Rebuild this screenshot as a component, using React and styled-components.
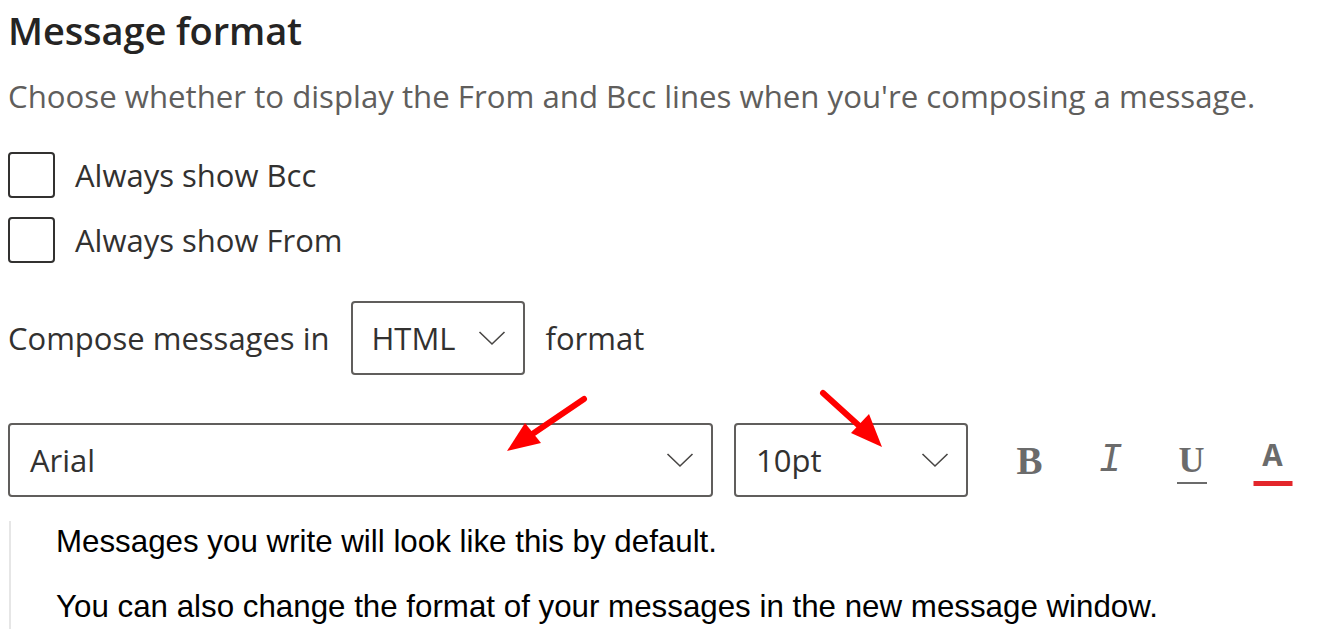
import React from "react";
import styled, { createGlobalStyle } from "styled-components";

const Global = createGlobalStyle`
  html, body { margin: 0; padding: 0; background: #fff; }
  body { font-family: "Open Sans", "Noto Sans", sans-serif; color: #323130; }
`;

const Page = styled.div`
  position: relative;
  width: 1328px;
  height: 639px;
  overflow: hidden;
  padding: 0 0 0 8px;
  box-sizing: border-box;
`;

const Title = styled.h1`
  margin: 0;
  padding-top: 4px;
  font-size: 38px;
  font-weight: 600;
  line-height: 52px;
  color: #252423;
  letter-spacing: -0.1px;
`;

const Desc = styled.p`
  margin: 19px 0 0;
  font-size: 31.2px;
  line-height: 42px;
  color: #605e5c;
`;

const CheckList = styled.div`
  margin-top: 35px;
  display: flex;
  flex-direction: column;
  gap: 19px;
`;

const CheckRow = styled.label`
  display: flex;
  align-items: center;
  gap: 20px;
  font-size: 31px;
  line-height: 42px;
  color: #323130;
`;

const Box = styled.span`
  width: 43px;
  height: 42px;
  border: 2px solid #323130;
  border-radius: 4px;
  box-sizing: content-box;
  flex: none;
`;

const ComposeRow = styled.div`
  margin-top: 38px;
  display: flex;
  align-items: center;
  gap: 21px;
  font-size: 31px;
  color: #323130;
`;

const Select = styled.div`
  box-sizing: border-box;
  height: 74px;
  width: ${(p) => p.$w}px;
  border: 2px solid #605e5c;
  border-radius: 4px;
  display: flex;
  align-items: center;
  justify-content: space-between;
  padding: 0 ${(p) => p.$pr}px 0 ${(p) => p.$pl}px;
  font-size: 31px;
  color: #323130;
  flex: none;
`;

const Toolbar = styled.div`
  margin-top: 48px;
  display: flex;
  align-items: center;
  gap: 21px;
`;

const FmtGroup = styled.div`
  display: flex;
  align-items: center;
  margin-left: 0;
  padding-top: 2px;
`;

const FmtBtn = styled.span`
  position: relative;
  width: 81px;
  height: 48px;
  display: flex;
  justify-content: center;
  align-items: center;
  font-family: ${(p) =>
    p.$serif ? '"Liberation Serif", "Times New Roman", serif' : '"Liberation Mono", "DejaVu Sans Mono", monospace'};
  font-size: ${(p) => p.$size || 40}px;
  line-height: 48px;
  color: #6b6b6b;
  font-weight: ${(p) => (p.$bold ? 700 : 400)};
  font-style: ${(p) => (p.$italic ? "italic" : "normal")};
`;

const Glyph = styled.span`
  display: block;
  transform: translateY(${(p) => p.$dy || 0}px);
`;

const Under = styled.span`
  position: absolute;
  left: 50%;
  transform: translateX(-50%);
  bottom: ${(p) => p.$b}px;
  width: ${(p) => p.$w}px;
  height: ${(p) => p.$h}px;
  background: ${(p) => p.$c};
`;

const Preview = styled.div`
  margin-top: 24px;
  margin-left: 1px;
  border-left: 2px solid #e6e6e6;
  padding: 4px 0 0 45px;
  font-family: "Liberation Sans", Arial, sans-serif;
  font-size: 31.3px;
  color: #000;
  height: 104px;
`;

const PLine = styled.p`
  margin: 0 0 ${(p) => p.$mb || 0}px;
  line-height: 34px;
`;

const Overlay = styled.svg`
  position: absolute;
  left: 0;
  top: 0;
  pointer-events: none;
`;

const Chevron = () => (
  <svg width="28" height="16" viewBox="0 0 28 16" fill="none">
    <path d="M1.5 2 L14 14 L26.5 2" stroke="#484644" strokeWidth="1.6" />
  </svg>
);

export default function App() {
  return (
    <>
      <Global />
      <Page>
        <Title>Message format</Title>
        <Desc>Choose whether to display the From and Bcc lines when you're composing a message.</Desc>
        <CheckList>
          <CheckRow><Box />Always show Bcc</CheckRow>
          <CheckRow><Box />Always show From</CheckRow>
        </CheckList>
        <ComposeRow>
          Compose messages in
          <Select $w={174} $pl={19} $pr={17}>
            HTML
            <Chevron />
          </Select>
          format
        </ComposeRow>
        <Toolbar>
          <Select $w={705} $pl={20} $pr={17}>
            Arial
            <Chevron />
          </Select>
          <Select $w={234} $pl={20} $pr={17}>
            10pt
            <Chevron />
          </Select>
          <FmtGroup>
            <FmtBtn $serif $bold $size={39}><Glyph>B</Glyph></FmtBtn>
            <FmtBtn $italic><Glyph>I</Glyph></FmtBtn>
            <FmtBtn $serif $bold $size={36}>
              <Glyph $dy={-1}>U</Glyph>
              <Under $b={1} $w={30} $h={2} $c="#6b6b6b" />
            </FmtBtn>
            <FmtBtn $bold $size={34}>
              <Glyph $dy={-4}>A</Glyph>
              <Under $b={-1} $w={39} $h={5} $c="#e3262b" />
            </FmtBtn>
          </FmtGroup>
        </Toolbar>
        <Preview>
          <PLine $mb={31}>Messages you write will look like this by default.</PLine>
          <PLine>You can also change the format of your messages in the new message window.</PLine>
        </Preview>
        <Overlay width="1328" height="639" viewBox="0 0 1328 639">
          <line x1="584" y1="399" x2="528" y2="437" stroke="#ff0000" strokeWidth="6" strokeLinecap="round" />
          <polygon points="507,451 525,423 541,443" fill="#ff0000" />
          <line x1="823" y1="393" x2="866" y2="432" stroke="#ff0000" strokeWidth="6" strokeLinecap="round" />
          <polygon points="882,447 851,433 869,414" fill="#ff0000" />
        </Overlay>
      </Page>
    </>
  );
}
